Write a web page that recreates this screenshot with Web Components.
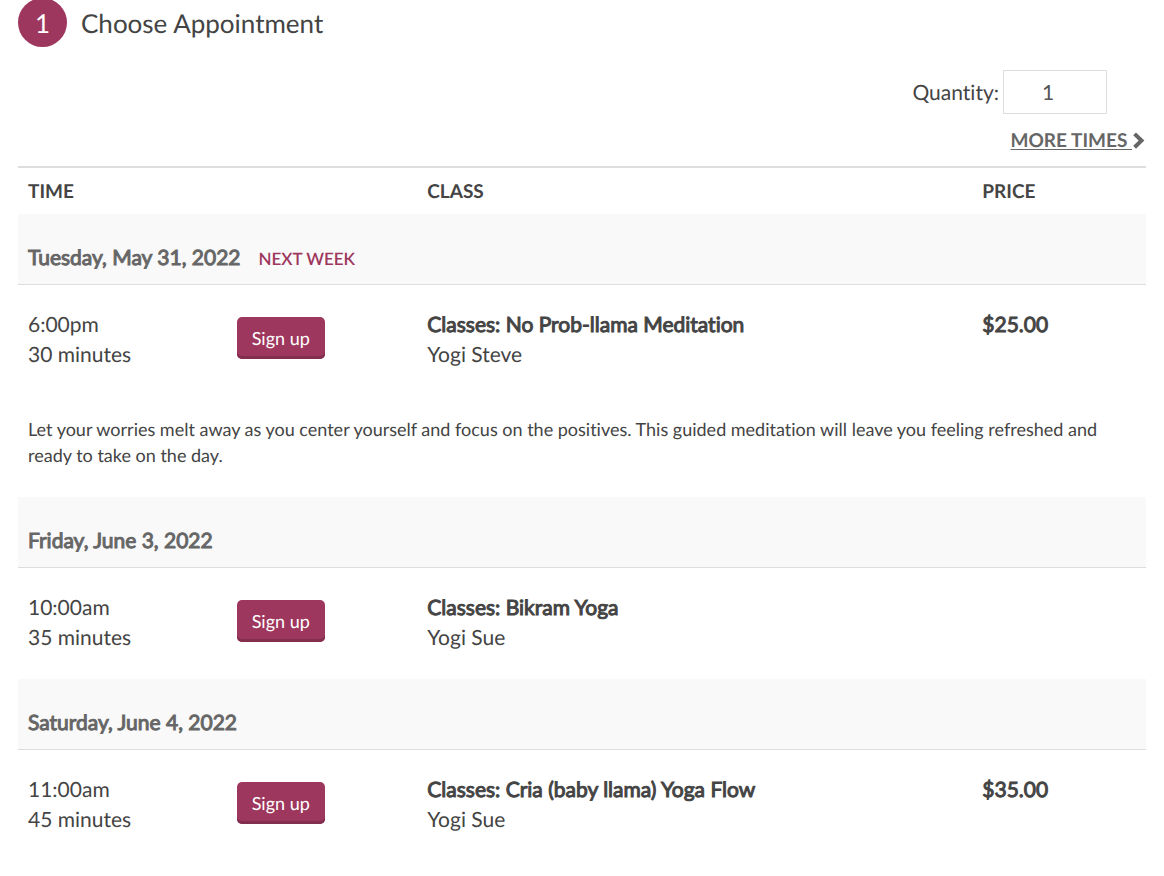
<!DOCTYPE html>
<html lang="en">
<head>
<meta charset="utf-8">
<title>Choose Appointment</title>
<style>
  body {
    margin: 0;
    padding: 0 18px;
    background: #fff;
    color: #444;
    font: 21px/30px Lato, sans-serif;
    font-variant-ligatures: none;
    text-rendering: geometricPrecision;
    --accent: #9e375d;
    --accent-dark: #842e4e;
    --muted: #666;
    --rule: #ddd;
  }
</style>
</head>
<body>
<booking-step number="1">Choose Appointment</booking-step>
<quantity-field value="1">Quantity:</quantity-field>
<more-times href="#more">MORE TIMES </more-times>
<class-schedule></class-schedule>

<script>
const define = (name, html, setup) => customElements.define(name, class extends HTMLElement {
  connectedCallback() {
    if (this.shadowRoot) return;
    this.attachShadow({ mode: "open" }).innerHTML = html;
    if (setup) setup(this, this.shadowRoot);
  }
});

define("booking-step", `
  <style>
    :host { display: block; }
    h1 { display: flex; align-items: flex-start; gap: 14px; margin: -2px 0 0; font-size: 26px; line-height: 51px; font-weight: 400; }
    .number { width: 49px; height: 49px; border-radius: 50%; background: var(--accent); color: #fff; text-align: center; }
  </style>
  <h1><span class="number"></span><slot></slot></h1>
`, (host, root) => { root.querySelector(".number").textContent = host.getAttribute("number"); });

define("quantity-field", `
  <style>
    :host { display: block; padding: 21px 39px 0 0; }
    div { display: flex; justify-content: flex-end; align-items: center; gap: 4px; }
    label { line-height: 32px; padding-top: 1px; }
    input { box-sizing: border-box; width: 104px; height: 44px; margin: 0; padding: 0 14px 2px 0; border: 1px solid #ddd; background: #fff; color: #555; font: inherit; text-align: center; outline: none; }
  </style>
  <div><label for="qty"><slot></slot></label><input id="qty" type="text" inputmode="numeric"></div>
`, (host, root) => { root.querySelector("input").value = host.getAttribute("value"); });

define("more-times", `
  <style>
    :host { display: flex; justify-content: flex-end; padding: 12px 1px 10px 0; }
    a { display: flex; align-items: center; color: var(--muted); font-size: 19px; font-weight: 700; text-decoration: none; }
    span { white-space: pre; text-decoration: underline; text-decoration-thickness: 1px; text-underline-offset: 2px; }
    svg { display: block; width: 13px; height: 18px; }
  </style>
  <a><span><slot></slot></span><svg viewBox="0 0 13 18" aria-hidden="true"><path d="M2.6 1.9 9.5 8.6 2.6 15.3" fill="none" stroke="currentColor" stroke-width="4"/></svg></a>
`, (host, root) => { root.querySelector("a").href = host.getAttribute("href"); });

define("sign-up", `
  <style>
    :host { display: block; }
    button { display: block; box-sizing: border-box; height: 42px; margin: 0; padding: 0 15px; border: 0; border-radius: 5px; background: var(--accent); box-shadow: inset 0 -3px 0 var(--accent-dark); color: #fff; font: inherit; font-size: 18px; line-height: 42px; text-rendering: inherit; cursor: pointer; }
  </style>
  <button type="button"><slot></slot></button>
`);

define("class-schedule", `
  <style>
    :host { display: block; }
    table { width: 100%; table-layout: fixed; border-collapse: separate; border-spacing: 0; border-top: 2px solid var(--rule); }
    .time { width: 18.5%; }
    .action { width: 16.9%; }
    .class { width: 49.2%; }
    th, td { padding: 0 10px; text-align: left; vertical-align: top; }
    thead th { padding: 9px 10px 7px; font-size: 19px; font-weight: 700; }
    .day th { padding: 29px 10px 11px; border-bottom: 1px solid var(--rule); background: #f9f9f9; color: var(--muted); font-weight: 400; }
    .heavy { -webkit-text-stroke: 1px currentColor; }
    .week { margin-left: 18px; color: var(--accent); font-size: 17px; line-height: 20px; font-weight: 600; }
    .session td { padding-top: 25px; padding-bottom: 26px; }
    .session td.cta { padding-top: 32px; padding-bottom: 0; }
    .heavy, .line { display: block; }
    .day .heavy { display: inline; }
    .about td { padding-top: 20px; padding-bottom: 29px; font-size: 18px; line-height: 26px; }
  </style>
  <table>
    <colgroup><col class="time"><col class="action"><col class="class"><col></colgroup>
    <thead><tr><th scope="col" colspan="2">TIME</th><th scope="col">CLASS</th><th scope="col">PRICE</th></tr></thead>
    <tbody>
      <tr class="day"><th colspan="4" scope="colgroup"><span class="heavy">Tuesday, May 31, 2022</span><span class="week">NEXT WEEK</span></th></tr>
      <tr class="session">
        <td><span class="line">6:00pm</span><span class="line">30 minutes</span></td>
        <td class="cta"><sign-up>Sign up</sign-up></td>
        <td><span class="heavy">Classes: No Prob-llama Meditation</span><span class="line">Yogi Steve</span></td>
        <td><span class="heavy">$25.00</span></td>
      </tr>
      <tr class="about"><td colspan="4">Let your worries melt away as you center yourself and focus on the positives. This guided meditation will leave you feeling refreshed and ready to take on the day.</td></tr>
    </tbody>
    <tbody>
      <tr class="day"><th colspan="4" scope="colgroup"><span class="heavy">Friday, June 3, 2022</span></th></tr>
      <tr class="session">
        <td><span class="line">10:00am</span><span class="line">35 minutes</span></td>
        <td class="cta"><sign-up>Sign up</sign-up></td>
        <td><span class="heavy">Classes: Bikram Yoga</span><span class="line">Yogi Sue</span></td>
        <td></td>
      </tr>
    </tbody>
    <tbody>
      <tr class="day"><th colspan="4" scope="colgroup"><span class="heavy">Saturday, June 4, 2022</span></th></tr>
      <tr class="session">
        <td><span class="line">11:00am</span><span class="line">45 minutes</span></td>
        <td class="cta"><sign-up>Sign up</sign-up></td>
        <td><span class="heavy">Classes: Cria (baby llama) Yoga Flow</span><span class="line">Yogi Sue</span></td>
        <td><span class="heavy">$35.00</span></td>
      </tr>
    </tbody>
  </table>
`);
</script>
</body>
</html>
